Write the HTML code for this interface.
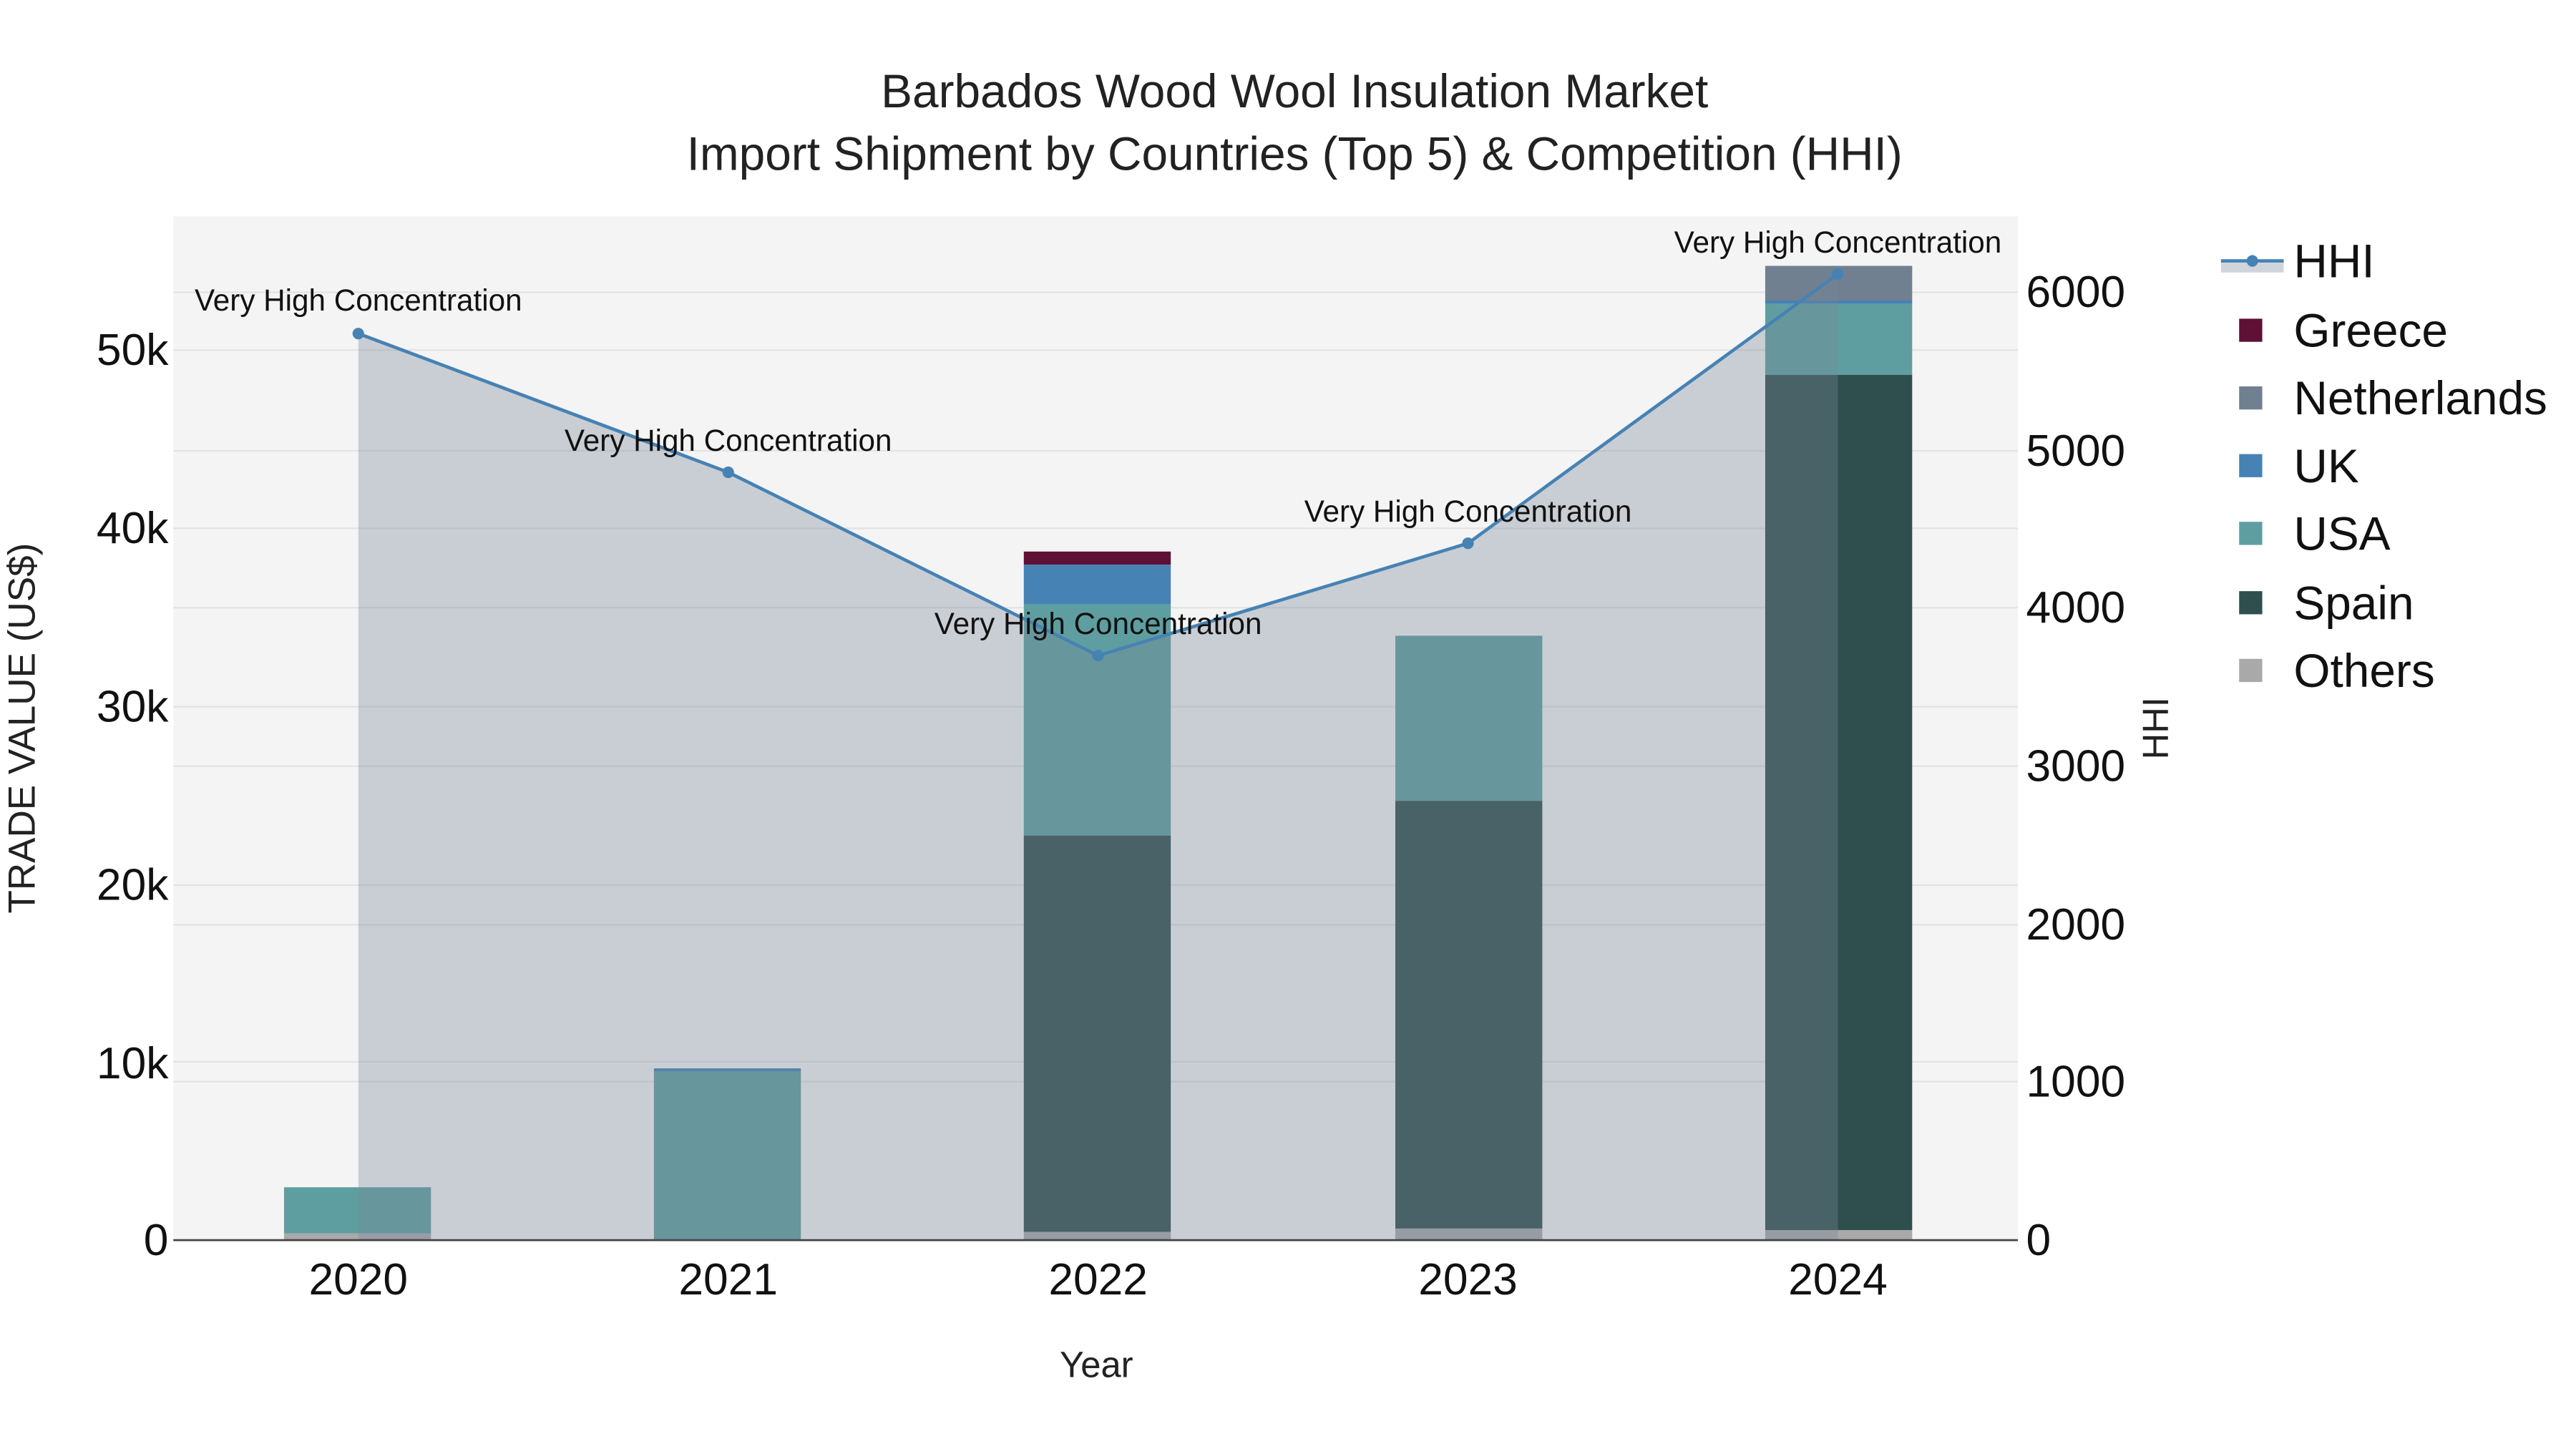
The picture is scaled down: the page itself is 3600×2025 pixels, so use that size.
<!DOCTYPE html>
<html><head><meta charset="utf-8"><style>html,body{margin:0;padding:0;background:#fff}svg{display:block}</style></head><body>
<svg width="3600" height="2025" viewBox="0 0 1560 877.5" xmlns="http://www.w3.org/2000/svg" font-family="Liberation Sans, sans-serif">
<rect x="0" y="0" width="1560" height="877.5" fill="#fff"/>
<rect x="105" y="131" width="1117" height="620" fill="#f4f4f4"/>
<g stroke="#e3e3e3" stroke-width="1">
<line x1="105" x2="1222" y1="643" y2="643"/><line x1="105" x2="1222" y1="536" y2="536"/><line x1="105" x2="1222" y1="428" y2="428"/><line x1="105" x2="1222" y1="320" y2="320"/><line x1="105" x2="1222" y1="212" y2="212"/>
<line x1="105" x2="1222" y1="655" y2="655"/><line x1="105" x2="1222" y1="560" y2="560"/><line x1="105" x2="1222" y1="464" y2="464"/><line x1="105" x2="1222" y1="368" y2="368"/><line x1="105" x2="1222" y1="273" y2="273"/><line x1="105" x2="1222" y1="177" y2="177"/>
</g>
<g>
<rect x="172" y="719" width="89" height="28" fill="#5f9ea0"/><rect x="172" y="747" width="89" height="4" fill="#a9a9a9"/>
<rect x="396" y="647" width="89" height="2" fill="#4682b4"/><rect x="396" y="649" width="89" height="102" fill="#5f9ea0"/>
<rect x="620" y="334" width="89" height="8" fill="#5f1035"/><rect x="620" y="342" width="89" height="24" fill="#4682b4"/><rect x="620" y="366" width="89" height="140" fill="#5f9ea0"/><rect x="620" y="506" width="89" height="240" fill="#2f4f4f"/><rect x="620" y="746" width="89" height="5" fill="#a9a9a9"/>
<rect x="845" y="385" width="89" height="100" fill="#5f9ea0"/><rect x="845" y="485" width="89" height="259" fill="#2f4f4f"/><rect x="845" y="744" width="89" height="7" fill="#a9a9a9"/>
<rect x="1069" y="161" width="89" height="21" fill="#708090"/><rect x="1069" y="182" width="89" height="2" fill="#4682b4"/><rect x="1069" y="184" width="89" height="43" fill="#5f9ea0"/><rect x="1069" y="227" width="89" height="518" fill="#2f4f4f"/><rect x="1069" y="745" width="89" height="6" fill="#a9a9a9"/>
</g>
<polygon points="217,202 441,286 665,397 889,329 1113,166 1113,751 217,751" fill="rgba(119,136,153,0.35)"/>
<line x1="105" x2="1222" y1="751" y2="751" stroke="#444" stroke-width="1.2"/>
<polyline points="217,202 441,286 665,397 889,329 1113,166" fill="none" stroke="#4682b4" stroke-width="2"/>
<g fill="#4682b4"><circle cx="217" cy="202" r="3.5"/><circle cx="441" cy="286" r="3.5"/><circle cx="665" cy="397" r="3.5"/><circle cx="889" cy="329" r="3.5"/><circle cx="1113" cy="166" r="3.5"/></g>
<g font-size="18.3" fill="#111" text-anchor="middle">
<text x="217" y="188">Very High Concentration</text><text x="441" y="273">Very High Concentration</text><text x="665" y="384">Very High Concentration</text><text x="889" y="316">Very High Concentration</text><text x="1113" y="153">Very High Concentration</text>
</g>
<g font-size="28.5" fill="#222" text-anchor="middle">
<text x="784" y="65">Barbados Wood Wool Insulation Market</text>
<text x="784" y="103">Import Shipment by Countries (Top 5) &amp; Competition (HHI)</text>
</g>
<g font-size="27" fill="#111" text-anchor="end">
<text x="102" y="760">0</text><text x="102" y="653">10k</text><text x="102" y="545">20k</text><text x="102" y="437">30k</text><text x="102" y="329">40k</text><text x="102" y="221">50k</text>
</g>
<g font-size="27" fill="#111">
<text x="1227" y="760">0</text><text x="1227" y="664">1000</text><text x="1227" y="569">2000</text><text x="1227" y="473">3000</text><text x="1227" y="377">4000</text><text x="1227" y="282">5000</text><text x="1227" y="186">6000</text>
</g>
<g font-size="27" fill="#111" text-anchor="middle">
<text x="217" y="784">2020</text><text x="441" y="784">2021</text><text x="665" y="784">2022</text><text x="889" y="784">2023</text><text x="1113" y="784">2024</text>
</g>
<text x="664" y="834" font-size="22" fill="#222" text-anchor="middle">Year</text>
<text transform="translate(21,441) rotate(-90)" font-size="23" fill="#222" text-anchor="middle">TRADE VALUE (US$)</text>
<text transform="translate(1313,441) rotate(-90)" font-size="22" fill="#222" text-anchor="middle">HHI</text>
<rect x="1345" y="158" width="38" height="7" fill="#d0d5db"/>
<line x1="1345" x2="1383" y1="158" y2="158" stroke="#4682b4" stroke-width="2"/><circle cx="1364" cy="158" r="3.5" fill="#4682b4"/>
<rect x="1356" y="193" width="14" height="14" fill="#5f1035"/>
<rect x="1356" y="234" width="14" height="14" fill="#708090"/>
<rect x="1356" y="275" width="14" height="14" fill="#4682b4"/>
<rect x="1356" y="316" width="14" height="14" fill="#5f9ea0"/>
<rect x="1356" y="358" width="14" height="14" fill="#2f4f4f"/>
<rect x="1356" y="399" width="14" height="14" fill="#a9a9a9"/>
<g font-size="28.5" fill="#111">
<text x="1389" y="168">HHI</text><text x="1389" y="210">Greece</text><text x="1389" y="251">Netherlands</text><text x="1389" y="292">UK</text><text x="1389" y="333">USA</text><text x="1389" y="375">Spain</text><text x="1389" y="416">Others</text>
</g>
</svg>
</body></html>
